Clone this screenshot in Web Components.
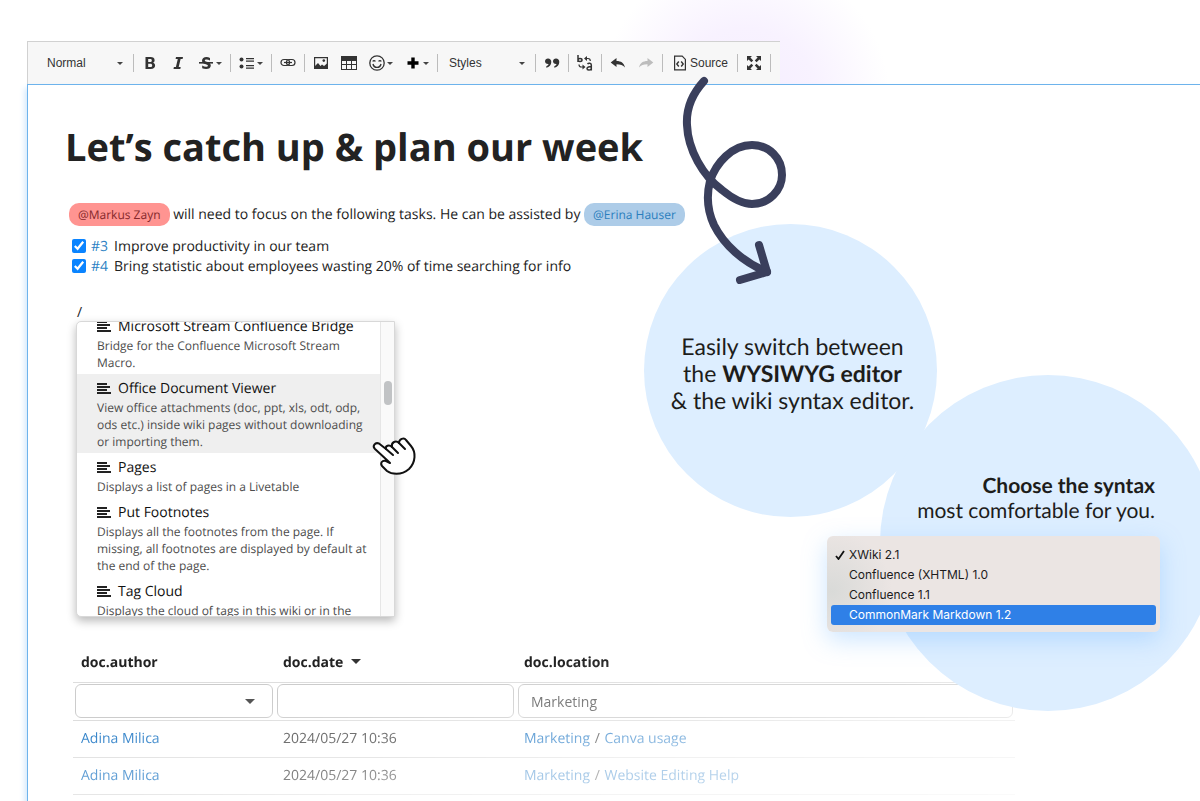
<!DOCTYPE html>
<html lang="en">
<head>
<meta charset="utf-8">
<meta name="viewport" content="width=device-width, initial-scale=1">
<title>Let’s catch up &amp; plan our week</title>
<style>
    body {
        margin: 0;
        background: #fff;
        color: #222;
        font-family: "Open Sans", "Noto Sans", sans-serif;
        font-size: 14px;
        line-height: 20px;
        text-rendering: geometricPrecision;

        --color-link: #2b7fc3;
        --color-focus: #6db3ec;
        --color-border: #d1d1d1;
        --color-bubble: #ddeeff;
        --color-arrow: #3a3f5c;
    }

    h1 {
        margin: 0 0 31px;
        padding-left: 2px;
        font-size: 38px;
        line-height: 50px;
        font-weight: 700;
    }

    p { margin: 0; }
    .intro { padding-left: 6px; line-height: 24px; }
    .tasks { padding: 10px 0 26px 9px; }
    .slash { padding-left: 14px; }
    macro-menu { margin: -2px 0 0 13px; }
    live-table { margin: 28px 0 0 10px; }

    .switch { left: 644px; top: 224px; --size: 293px; }
    .choose { left: 880px; top: 375px; --size: 336px; }
    .choose-text { right: 45px; top: 473px; }
    syntax-menu { right: 40px; top: 536px; }
    curly-arrow { left: 676px; top: 72px; }
    hand-cursor { left: 371px; top: 434px; }
</style>
</head>
<body>

<demo-stage>
    <editor-toolbar></editor-toolbar>
    <editor-area>
        <h1>Let’s catch up &amp; plan our week</h1>
        <p class="intro"><user-mention tone="red">@Markus Zayn</user-mention> will need to focus on the following tasks. He can be assisted by <user-mention>@Erina Hauser</user-mention></p>
        <div class="tasks">
            <task-item number="3">Improve productivity in our team</task-item>
            <task-item number="4">Bring statistic about employees wasting 20% of time searching for info</task-item>
        </div>
        <p class="slash">/</p>
        <macro-menu>
            <macro-item name="Microsoft Stream Confluence Bridge">Bridge for the Confluence Microsoft Stream Macro.</macro-item>
            <macro-item name="Office Document Viewer" active>View office attachments (doc, ppt, xls, odt, odp, ods etc.) inside wiki pages without downloading or importing them.</macro-item>
            <macro-item name="Pages">Displays a list of pages in a Livetable</macro-item>
            <macro-item name="Put Footnotes">Displays all the footnotes from the page. If missing, all footnotes are displayed by default at the end of the page.</macro-item>
            <macro-item name="Tag Cloud">Displays the cloud of tags in this wiki or in the</macro-item>
        </macro-menu>
        <live-table></live-table>
    </editor-area>

    <info-bubble class="switch" slot="overlay">Easily switch between<br>the <b>WYSIWYG editor</b><br>&amp; the wiki syntax editor.</info-bubble>
    <info-bubble class="choose" slot="overlay"></info-bubble>
    <bubble-text class="choose-text" slot="overlay"><b>Choose the syntax</b><br>most comfortable for you.</bubble-text>
    <syntax-menu slot="overlay"></syntax-menu>
    <curly-arrow slot="overlay"></curly-arrow>
    <hand-cursor slot="overlay"></hand-cursor>
</demo-stage>

<script>
/* 16x16 toolbar icons */
const ICONS = {
    bold: '<path fill-rule="evenodd" d="M3.500 2h5c2.600 0 4.100 1.100 4.100 3.200 0 1.300-.7 2.200-1.800 2.600 1.500.3 2.300 1.300 2.300 2.800C13.100 12.800 11.500 14 8.800 14H3.500zM6.200 4v2.900H8c1.200 0 1.800-.5 1.800-1.500S9.200 4 8 4zm0 4.800V12h2c1.300 0 2-.5 2-1.600s-.7-1.600-2-1.600z"/>',
    italic: '<path d="M6 2h7l-.4 1.900h-2L8.700 12.100h2L10.300 14H3.500l.4-1.900h2L7.800 3.900h-2.200z"/>',
    strike: '<path d="M12 3v2.400c-1.200-.6-2.300-.9-3.300-.9-1.200 0-1.900.3-1.900.9 0 1.600 6 .9 6 5 0 2.300-1.900 3.600-4.700 3.600-1.400 0-2.700-.3-3.900-.8v-2.600c1.300.8 2.500 1.200 3.700 1.200s2-.4 2-1.100C9.900 8.600 4 9.600 4 5.700 4 3.400 5.800 2 8.500 2c1.200 0 2.400.3 3.500 1z"/><path d="M1 7h14v1.600H1z"/>',
    list: '<circle cx="2.500" cy="4.500" r="2"/><circle cx="2.500" cy="11.500" r="2"/><path d="M7 3h8v1.200H7zM7 5.500h8v1.200H7zM7 10h8v1.200H7zM7 12.500h8v1.200H7z"/>',
    link: '<g fill="none" stroke="currentColor" stroke-width="1.200"><rect x="1" y="4.500" width="8.600" height="6" rx="3"/><rect x="6.400" y="4.500" width="8.600" height="6" rx="3"/><path d="M4 7.500h8"/></g>',
    image: '<path fill-rule="evenodd" d="M1 2h14v12H1zm1.200 1.200v9.600h11.600V3.200z"/><path d="M2 13v-2l3-3 2.500 3 1.500-1.500 2 1.500 3-2.500V13z"/><circle cx="10.800" cy="5.600" r="1.300"/>',
    table: '<path fill-rule="evenodd" d="M0 1h16v14H0zm1 5v3h4V6zm5 0v3h4V6zm5 0v3h4V6zM1 10v4h4v-4zm5 0v4h4v-4zm5 0v4h4v-4z"/>',
    smiley: '<circle cx="8" cy="8" r="7.200" fill="none" stroke="currentColor" stroke-width="1.300"/><path d="M4 9c1 4.500 7 4.500 8 0" fill="none" stroke="currentColor" stroke-width="1.400"/><path d="M3.800 6.500c.5-1.300 2-1.300 2.500 0M9.700 6.500c.5-1.300 2-1.300 2.500 0" fill="none" stroke="currentColor" stroke-width="1.300"/>',
    plus: '<path fill="#000" d="M6.300 2.500h3.400v3.800h3.800v3.400H9.700v3.800H6.300V9.700H2.500V6.300h3.800z"/>',
    quote: '<path d="M4 3.500c2 0 3.300 1.400 3.300 3.500 0 3-2 5.200-5 5.800v-1.500c1.300-.5 2-1.300 2.200-2.200C2.300 9.300 1 8 1 6.300 1 4.700 2.300 3.500 4 3.500zM12 3.500c2 0 3.300 1.400 3.300 3.500 0 3-2 5.200-5 5.800v-1.500c1.300-.5 2-1.300 2.200-2.200C10.300 9.300 9 8 9 6.300c0-1.600 1.300-2.800 3-2.800z"/>',
    language: '<g fill="none" stroke="currentColor" stroke-width="1.500"><path d="M1 0v7M1 5c0-2 4-2 4 0s-4 2-4 0M10.500 9c1-1.200 3.800-1 3.800 1v5.500M14.300 12c-2-.6-4.300 0-4.300 1.600 0 2 3.300 1.800 4.300.2"/><path d="M9.500 3.500h1.500c1.500 0 2.300.8 2.300 2.500M2 9.500c0 1.800.8 2.500 2.300 2.500H6" stroke-width="1.200"/></g><path d="M10 1v5L7 3.500zM5.500 9.500v5L8.500 12z"/>',
    undo: '<path d="M6.500 3v3c4.500 0 7.500 2 8.500 6.500C13 10 10.500 9.300 6.500 9.300V12L.7 7.500z"/>',
    redo: '<path fill="#bdbdbd" d="M9.500 3v3C5 6 2 8 1 12.500 3 10 5.500 9.300 9.500 9.300V12l5.800-4.500z"/>',
    source: '<path d="M2.600 1.200h7.600l3.200 3.200v10.400H2.600z" fill="none" stroke="currentColor" stroke-width="1.200"/><path d="M6.800 6.500 4.800 9l2 2.500M9.200 6.500l2 2.500-2 2.500" fill="none" stroke="currentColor" stroke-width="1.400"/>',
    maximize: '<path d="M1 1h5L4.400 2.600l2.800 2.800-1.800 1.800-2.800-2.800L1 6zM15 1v5l-1.600-1.600-2.800 2.800-1.800-1.800 2.800-2.800L10 1zM1 15v-5l1.600 1.600 2.800-2.800 1.800 1.800-2.800 2.800L6 15zM15 15h-5l1.600-1.600-2.800-2.800 1.800-1.800 2.800 2.800L15 10z"/>',
};

const icon = (name) =>
    `<svg width="16" height="16" viewBox="0 0 16 16" fill="currentColor" aria-hidden="true">${ICONS[name]}</svg>`;

class ShadowElement extends HTMLElement {
    constructor() {
        super();
        this.attachShadow({ mode: 'open' });
    }

    connectedCallback() {
        this.shadowRoot.innerHTML = this.render();
    }
}

class DemoStage extends ShadowElement {
    render() {
        return `
        <style>
            :host {
                display: flex;
                flex-direction: column;
                position: relative;
                box-sizing: border-box;
                min-height: 100vh;
                padding: 41px 0 0 27px;
                overflow: hidden;
                background: radial-gradient(circle 145px at 745px 100px, #f5edff 0, #f8f2ff 50%, #fff 100%);
            }
        </style>
        <slot></slot>
        <slot name="overlay"></slot>`;
    }
}
customElements.define('demo-stage', DemoStage);

class ToolButton extends ShadowElement {
    render() {
        const label = this.getAttribute('label');
        return `
        <style>
            :host { display: block; }
            button {
                display: flex;
                align-items: center;
                justify-content: center;
                gap: 2px;
                width: 28px;
                height: 28px;
                padding: 0;
                border: 0;
                background: none;
                color: #333;
                font: 12px/16px "Liberation Sans", Arial, sans-serif;
            }
            :host([menu]) button { width: 36px; }
            :host([text]) button { width: 70px; }
            .caret {
                border: 3px solid transparent;
                border-top-color: #444;
                border-bottom: 0;
            }
        </style>
        <button type="button" aria-label="${label}">
            ${icon(this.getAttribute('icon'))}
            ${this.hasAttribute('text') ? `<span>${label}</span>` : ''}
            ${this.hasAttribute('menu') ? '<span class="caret"></span>' : ''}
        </button>`;
    }
}
customElements.define('tool-button', ToolButton);

class ToolSelect extends ShadowElement {
    render() {
        const value = this.getAttribute('value');
        return `
        <style>
            :host { display: flex; align-items: center; width: 93px; }
            select {
                appearance: none;
                flex: 1;
                min-width: 0;
                height: 28px;
                padding: 0 9px;
                border: 0;
                background: none;
                color: #333;
                font: 12px/16px "Liberation Sans", Arial, sans-serif;
            }
            .caret {
                margin-right: 8px;
                border: 3px solid transparent;
                border-top-color: #444;
                border-bottom: 0;
            }
        </style>
        <select aria-label="${this.getAttribute('label')}"><option>${value}</option></select>
        <span class="caret"></span>`;
    }
}
customElements.define('tool-select', ToolSelect);

class ToolGroup extends ShadowElement {
    render() {
        return `
        <style>
            :host { display: flex; align-items: center; padding-left: 2px; }
            .separator {
                width: 1px;
                height: 18px;
                margin-left: 2px;
                background: #bcbcbc;
            }
        </style>
        <slot></slot>
        <span class="separator"></span>`;
    }
}
customElements.define('tool-group', ToolGroup);

class EditorToolbar extends ShadowElement {
    render() {
        return `
        <style>
            :host {
                display: flex;
                align-self: flex-start;
                align-items: center;
                box-sizing: border-box;
                height: 43px;
                padding: 0 9px 0 8px;
                border: 1px solid var(--color-border);
                border-width: 1px 0 0 1px;
                background: #f7f7f7;
            }
        </style>
        <tool-group><tool-select label="Paragraph format" value="Normal"></tool-select></tool-group>
        <tool-group>
            <tool-button icon="bold" label="Bold"></tool-button>
            <tool-button icon="italic" label="Italic"></tool-button>
            <tool-button icon="strike" label="Strikethrough" menu></tool-button>
        </tool-group>
        <tool-group><tool-button icon="list" label="Lists" menu></tool-button></tool-group>
        <tool-group><tool-button icon="link" label="Link"></tool-button></tool-group>
        <tool-group>
            <tool-button icon="image" label="Image"></tool-button>
            <tool-button icon="table" label="Table"></tool-button>
            <tool-button icon="smiley" label="Emoji" menu></tool-button>
            <tool-button icon="plus" label="Insert" menu></tool-button>
        </tool-group>
        <tool-group><tool-select label="Formatting styles" value="Styles"></tool-select></tool-group>
        <tool-group><tool-button icon="quote" label="Quote"></tool-button></tool-group>
        <tool-group><tool-button icon="language" label="Language"></tool-button></tool-group>
        <tool-group>
            <tool-button icon="undo" label="Undo"></tool-button>
            <tool-button icon="redo" label="Redo"></tool-button>
        </tool-group>
        <tool-group><tool-button icon="source" label="Source" text></tool-button></tool-group>
        <tool-group><tool-button icon="maximize" label="Maximize"></tool-button></tool-group>`;
    }
}
customElements.define('editor-toolbar', EditorToolbar);

class EditorArea extends ShadowElement {
    render() {
        return `
        <style>
            :host {
                display: block;
                flex: 1;
                padding: 37px 35px 0;
                border: 1px solid var(--color-focus);
                border-width: 1px 0 0 1px;
                background: #fff;
                box-shadow: -2px 4px 6px #cfe6fb;
            }
        </style>
        <slot></slot>`;
    }
}
customElements.define('editor-area', EditorArea);

class UserMention extends ShadowElement {
    render() {
        return `
        <style>
            :host { display: inline-block; }
            a {
                display: block;
                padding: 0 9px;
                border-radius: 10px;
                background: #adcce8;
                color: #2a7ebd;
                font-size: 12px;
                line-height: 23px;
                text-decoration: none;
            }
            :host([tone="red"]) a { background: #ff9491; color: #85282b; }
        </style>
        <a href="#"><slot></slot></a>`;
    }
}
customElements.define('user-mention', UserMention);

class TaskItem extends ShadowElement {
    render() {
        const number = this.getAttribute('number');
        return `
        <style>
            :host { display: flex; align-items: center; }
            input {
                width: 14px;
                height: 14px;
                margin: 0 5px 2px 0;
                accent-color: #0a84ff;
            }
            a { margin-right: 6px; color: var(--color-link); text-decoration: none; }
        </style>
        <input type="checkbox" id="done" checked>
        <a href="#">#${number}</a>
        <label for="done"><slot></slot></label>`;
    }
}
customElements.define('task-item', TaskItem);

class MacroItem extends ShadowElement {
    render() {
        return `
        <style>
            :host { display: block; padding: 5px 10px 3px 20px; }
            :host([active]) { background: #efefef; }
            .name {
                display: flex;
                align-items: center;
                gap: 7px;
                color: #111;
            }
            .text { color: #4c4c4c; font-size: 12px; line-height: 17px; }
        </style>
        <div class="name">
            <svg width="14" height="12" viewBox="0 0 14 12" aria-hidden="true"><path d="M0 0h10v2H0zM0 3h13v2H0zM0 6h10v2H0zM0 9h14v2H0z" fill="#222"/></svg>
            <span>${this.getAttribute('name')}</span>
        </div>
        <div class="text"><slot></slot></div>`;
    }
}
customElements.define('macro-item', MacroItem);

/* defined after macro-item, so the items have their height when the list scrolls */
class MacroMenu extends ShadowElement {
    connectedCallback() {
        super.connectedCallback();
        this.shadowRoot.querySelector('.list').scrollTop = 10;
    }

    render() {
        return `
        <style>
            :host {
                display: flex;
                box-sizing: border-box;
                width: 319px;
                height: 296px;
                border: 1px solid #d8d8d8;
                border-radius: 5px 0 0 5px;
                overflow: hidden;
                background: #fff;
                box-shadow: 0 4px 10px rgba(0, 0, 0, .28);
            }
            .list { flex: 1; overflow: hidden; }
            .track {
                width: 14px;
                box-sizing: border-box;
                border-left: 1px solid #e6e6e6;
                padding: 59px 2px 0 3px;
                background: #fafafa;
            }
            .thumb { height: 24px; border-radius: 4px; background: #c1c3c5; }
        </style>
        <div class="list"><slot></slot></div>
        <div class="track"><div class="thumb"></div></div>`;
    }
}
customElements.define('macro-menu', MacroMenu);

class LiveTable extends ShadowElement {
    render() {
        return `
        <style>
            :host {
                display: block;
                max-width: 942px;
                color: #444;
                -webkit-mask-image: linear-gradient(172deg, #000 30%, rgba(0, 0, 0, .75) 46%, rgba(0, 0, 0, .75) 54%, rgba(0, 0, 0, .45) 67%, rgba(0, 0, 0, .15) 100%);
                mask-image: linear-gradient(172deg, #000 30%, rgba(0, 0, 0, .75) 46%, rgba(0, 0, 0, .75) 54%, rgba(0, 0, 0, .45) 67%, rgba(0, 0, 0, .15) 100%);
            }
            table { width: 100%; border-collapse: collapse; table-layout: fixed; }
            th, td {
                box-sizing: border-box;
                height: 37px;
                padding: 0 8px;
                border-bottom: 1px solid #ddd;
                text-align: left;
            }
            th { color: #222; font-weight: 700; }
            .author { width: 202px; }
            .date { width: 241px; }
            .filters td { height: 38px; padding: 0 2px; }
            .sort {
                display: inline-block;
                margin: 0 0 3px 4px;
                border: 5px solid transparent;
                border-top-color: #333;
                border-bottom: 0;
            }
            input, select {
                display: block;
                box-sizing: border-box;
                width: 100%;
                height: 34px;
                padding: 0 12px;
                border: 1px solid #ccc;
                border-radius: 6px;
                background: #fff;
                color: #555;
                font: inherit;
            }
            select { appearance: none; }
            .picker { display: grid; align-items: center; }
            .picker > * { grid-area: 1 / 1; }
            .picker span {
                justify-self: end;
                margin-right: 18px;
                border: 5px solid transparent;
                border-top-color: #555;
                border-bottom: 0;
            }
            a { color: #2f80c8; text-decoration: none; }
            i { margin: 0 1px; font-style: normal; }
        </style>
        <table>
            <thead>
                <tr><th class="author">doc.author</th><th class="date">doc.date <span class="sort"></span></th><th>doc.location</th></tr>
                <tr class="filters">
                    <td><div class="picker"><select aria-label="Filter by doc.author"><option></option></select><span></span></div></td>
                    <td><input type="text" aria-label="Filter by doc.date"></td>
                    <td><input type="text" aria-label="Filter by doc.location" value="Marketing"></td>
                </tr>
            </thead>
            <tbody>
                <tr><td><a href="#">Adina Milica</a></td><td>2024/05/27 10:36</td><td><a href="#">Marketing</a> <i>/</i> <a href="#">Canva usage</a></td></tr>
                <tr><td><a href="#">Adina Milica</a></td><td>2024/05/27 10:36</td><td><a href="#">Marketing</a> <i>/</i> <a href="#">Website Editing Help</a></td></tr>
            </tbody>
        </table>`;
    }
}
customElements.define('live-table', LiveTable);

class BubbleText extends ShadowElement {
    render() {
        return `
        <style>
            :host {
                display: block;
                position: absolute;
                color: #1d1d1b;
                font: 21px/25px Lato, sans-serif;
                text-align: right;
                white-space: nowrap;
            }
        </style>
        <slot></slot>`;
    }
}
customElements.define('bubble-text', BubbleText);

class InfoBubble extends ShadowElement {
    render() {
        return `
        <style>
            :host {
                display: grid;
                place-content: center;
                position: absolute;
                box-sizing: border-box;
                width: var(--size);
                height: var(--size);
                padding: 6px 0 0 4px;
                border-radius: 50%;
                background: var(--color-bubble);
                color: #1d1d1b;
                font: 23px/27px Lato, sans-serif;
                text-align: center;
                white-space: nowrap;
            }
        </style>
        <div><slot></slot></div>`;
    }
}
customElements.define('info-bubble', InfoBubble);

class SyntaxMenu extends ShadowElement {
    render() {
        return `
        <style>
            :host {
                display: block;
                position: absolute;
                box-sizing: border-box;
                width: 333px;
                padding: 9px 4px 7px;
                border-radius: 6px;
                background: radial-gradient(circle 60px at 5px 55px, #d9dad8, #ebe5e3);
                box-shadow: 0 8px 24px rgba(110, 180, 255, .35);
            }
            button {
                display: flex;
                align-items: center;
                gap: 4px;
                width: 100%;
                height: 20px;
                padding: 0 4px;
                border: 0;
                border-radius: 3px;
                background: none;
                color: #1c1c1c;
                font: 12px/20px Inter, "Liberation Sans", sans-serif;
            }
            button[data-hover] { background: #2f80e7; color: #fff; }
            svg { width: 10px; height: 10px; visibility: hidden; }
            [aria-checked="true"] svg { visibility: visible; }
        </style>
        <div role="menu" aria-label="Syntax">
            ${this.row('XWiki 2.1', true)}
            ${this.row('Confluence (XHTML) 1.0')}
            ${this.row('Confluence 1.1')}
            ${this.row('CommonMark Markdown 1.2', false, 'data-hover')}
        </div>`;
    }

    row(text, checked = false, extra = '') {
        return `<button type="button" role="menuitemradio" aria-checked="${checked}" ${extra}><svg viewBox="0 0 10 10" aria-hidden="true"><path d="M1 6l2.500 3L9 1" fill="none" stroke="#111" stroke-width="1.800"/></svg>${text}</button>`;
    }
}
customElements.define('syntax-menu', SyntaxMenu);

class CurlyArrow extends ShadowElement {
    render() {
        return `
        <style>
            :host { display: block; position: absolute; pointer-events: none; }
            svg { display: block; }
        </style>
        <svg width="120" height="220" viewBox="676 72 120 220" fill="none" stroke="var(--color-arrow)" stroke-width="8" stroke-linecap="round" stroke-linejoin="round" aria-hidden="true">
            <path d="M704 81C693 93 686 108 687 125C688 150 703 176 722 190C733 199 743 204 752 204C769 204 782 190 782 175C782 158 769 145 752 145C732 145 716 163 710 181C706 197 707 210 714 225C724 245 743 262 767 272"/>
            <path d="M759 245L767 272L740 280"/>
        </svg>`;
    }
}
customElements.define('curly-arrow', CurlyArrow);

class HandCursor extends ShadowElement {
    render() {
        return `
        <style>
            :host { display: block; position: absolute; pointer-events: none; }
            svg { display: block; }
        </style>
        <svg width="46" height="42" viewBox="371 434 46 42" fill="#fff" stroke="#111" stroke-width="2" stroke-linejoin="round" stroke-linecap="round" aria-hidden="true">
            <path d="M388 461L375 449C372 446 375 442 379 443.500L386 449C385 446 389 444 392 447C391 442 396 440 399 443C399 439 404 437 406 440L411 446C416 452 416 462 409 469C401 476 391 474 387 471L382 466C380 463 382 460 386 461L390 463Z"/>
            <path d="M386 449L393 455M392 447L398 453M399 443L405 449" fill="none"/>
        </svg>`;
    }
}
customElements.define('hand-cursor', HandCursor);
</script>
</body>
</html>
